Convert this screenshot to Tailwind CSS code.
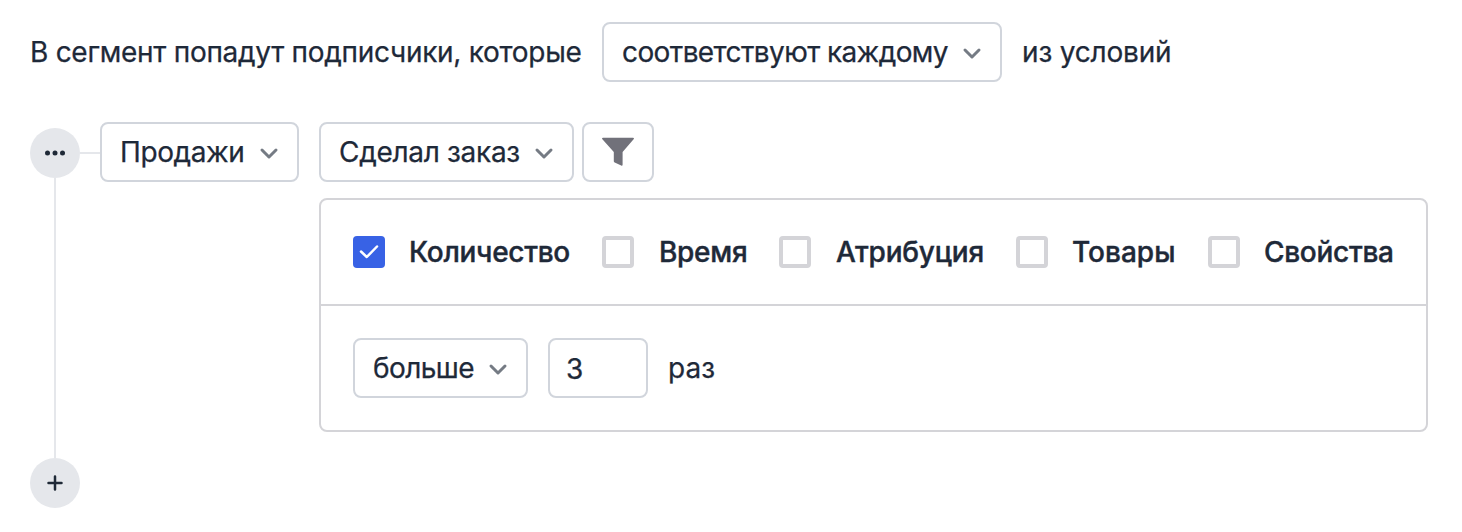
<!DOCTYPE html>
<html lang="ru"><head><meta charset="utf-8"><script src="https://cdn.jsdelivr.net/npm/@tailwindcss/browser@4"></script></head>
<body class="bg-white w-[1462px] h-[532px] overflow-hidden font-['Inter',sans-serif] [-webkit-text-stroke:0.25px_#1f2937] text-[28px] leading-8 text-gray-800 whitespace-nowrap">
<main class="pt-[22px] pl-[30px]">
<div class="flex items-center h-[60px]">
<span class="w-[572px] shrink-0 tracking-[-0.28px]">В сегмент попадут подписчики, которые</span>
<button class="w-[400px] h-[60px] shrink-0 border-2 border-gray-300 rounded-lg flex items-center justify-between px-[18px]"><span class="tracking-[-0.6px]">соответствуют каждому</span><svg width="20" height="20" viewBox="0 0 20 20" fill="none" stroke="#757b84" stroke-width="3" stroke-linecap="round" stroke-linejoin="round"><path d="M3 8l7 7 7-7"/></svg></button>
<span class="ml-5 tracking-[-0.18px]">из условий</span>
</div>
<div class="flex mt-10">
<div class="w-[50px] flex flex-col items-center pt-[6px] shrink-0">
<div class="size-[50px] rounded-full bg-gray-200 flex items-center justify-center"><svg width="20" height="6" viewBox="0 0 20 6" fill="#1f2937"><circle cx="2.500" cy="3" r="2.500"/><circle cx="10" cy="3" r="2.500"/><circle cx="17.500" cy="3" r="2.500"/></svg></div>
<div class="w-[2px] h-[280px] bg-gray-200"></div>
<div class="size-[50px] rounded-full bg-gray-200 flex items-center justify-center"><svg width="16" height="16" viewBox="0 0 16 16" stroke="#1f2937" stroke-width="2.500" stroke-linecap="round"><path d="M8 1.500v13M1.500 8h13"/></svg></div>
</div>
<div class="w-5 h-[2px] mt-[30px] bg-gray-200"></div>
<button class="w-[199px] h-[60px] shrink-0 border-2 border-gray-300 rounded-lg flex items-center justify-between px-[18px]"><span class="tracking-[-0.4px]">Продажи</span><svg width="20" height="20" viewBox="0 0 20 20" fill="none" stroke="#757b84" stroke-width="3" stroke-linecap="round" stroke-linejoin="round"><path d="M3 8l7 7 7-7"/></svg></button>
<div class="ml-5 w-[1109px]">
<div class="flex gap-2">
<button class="w-[255px] h-[60px] border-2 border-gray-300 rounded-lg flex items-center justify-between px-[18px]"><span class="tracking-[-0.3px]">Сделал заказ</span><svg width="20" height="20" viewBox="0 0 20 20" fill="none" stroke="#757b84" stroke-width="3" stroke-linecap="round" stroke-linejoin="round"><path d="M3 8l7 7 7-7"/></svg></button>
<button class="w-[72px] h-[60px] border-2 border-gray-300 rounded-lg flex items-center justify-center"><svg width="32" height="30" viewBox="0 0 32 30" fill="#71717a"><path d="M1 .8h30c1 0 1.200.8.600 1.500L20.600 15v12.700c0 1-.6 1.300-1.400.9l-6.500-3c-.6-.3-.9-.6-.9-1.300V15L.4 2.300C-.2 1.600 0 .8 1 .8z"/></svg></button>
</div>
<section class="mt-4 h-[234px] border-2 border-zinc-300 rounded-lg">
<div class="h-[106px] border-b-2 border-zinc-300 flex items-center pl-8 font-medium [-webkit-text-stroke:0.4px_#1f2937]">
<label class="flex items-center w-[249px] shrink-0"><span class="size-8 mr-6 rounded-[4px] bg-[#3862e5] flex items-center justify-center"><svg width="20" height="16" viewBox="0 0 20 16" fill="none" stroke="white" stroke-width="2.500" stroke-linecap="round" stroke-linejoin="round"><path d="M2 7.500l5.800 5.500L18 2.500"/></svg></span><span class="tracking-[-0.3px]">Количество</span></label>
<label class="flex items-center w-[177px] shrink-0"><span class="size-8 mr-6 rounded-[4px] border-4 border-zinc-300"></span><span class="pl-px tracking-[-0.3px]">Время</span></label>
<label class="flex items-center w-[237px] shrink-0"><span class="size-8 mr-6 rounded-[4px] border-4 border-zinc-300"></span><span class="pl-px tracking-[-0.22px]">Атрибуция</span></label>
<label class="flex items-center w-[192px] shrink-0"><span class="size-8 mr-6 rounded-[4px] border-4 border-zinc-300"></span><span>Товары</span></label>
<label class="flex items-center shrink-0"><span class="size-8 mr-6 rounded-[4px] border-4 border-zinc-300"></span><span class="tracking-[-0.3px]">Свойства</span></label>
</div>
<div class="flex items-center pt-8 pl-8">
<button class="w-[175px] h-[60px] border-2 border-gray-300 rounded-lg flex items-center justify-between px-[18px]"><span class="tracking-[-0.6px]">больше</span><svg width="20" height="20" viewBox="0 0 20 20" fill="none" stroke="#757b84" stroke-width="3" stroke-linecap="round" stroke-linejoin="round"><path d="M3 8l7 7 7-7"/></svg></button>
<div class="ml-5 w-[100px] h-[60px] border-2 border-gray-300 rounded-lg flex items-center pl-4 pt-[2px]">3</div>
<span class="ml-5">раз</span>
</div>
</section>
</div>
</div>
</main>
</body></html>
